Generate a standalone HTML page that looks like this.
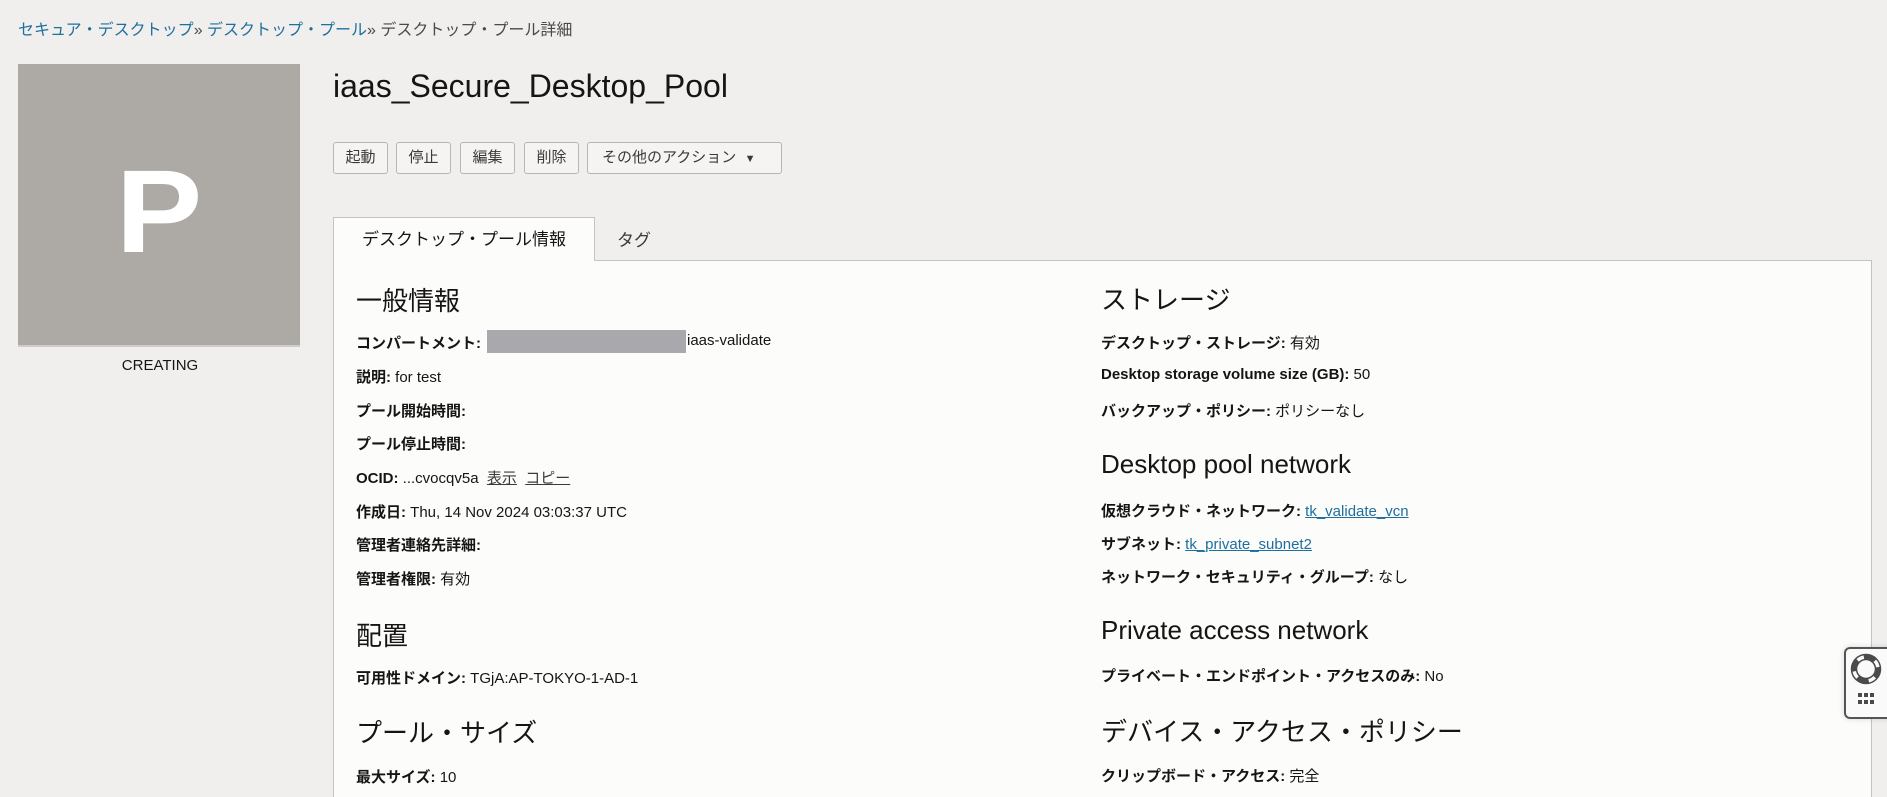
<!DOCTYPE html>
<html><head><meta charset="utf-8"><style>
*{margin:0;padding:0;box-sizing:border-box}
html,body{width:1887px;height:797px;overflow:hidden}
body{background:#f0efed;font-family:"Liberation Sans","Noto Sans CJK JP",sans-serif;color:#161513;position:relative}
.a{position:absolute;white-space:nowrap}
.bc{left:18px;top:16px;font-size:16px;color:#4a4a4a}
.bc a{color:#1e6f9e;text-decoration:none}
.pbox{left:18px;top:64px;width:282px;height:283px;background:#ada9a4;border-bottom:2px solid #cfcdca}
.pbox span{position:absolute;left:0;right:0;top:78px;text-align:center;color:#fff;font-weight:bold;font-size:118px;line-height:140px;transform:scaleX(1.1)}
.cr{left:120px;top:357px;font-size:15px;width:80px;text-align:center}
.title{left:333px;top:68px;font-size:32px}
.btn{top:142px;height:32px;border:1px solid #b8b6b2;border-radius:3px;background:#f5f4f2;font-size:15px;line-height:30px;text-align:center;color:#3a3a3a}
.tab1{left:333px;top:217px;width:262px;height:44px;background:#fcfcfb;border:1px solid #c5c3c0;border-bottom:none;font-size:17px;line-height:44px;text-align:center;z-index:2}
.tab2{left:617px;top:226px;font-size:17px;color:#3a3a3a}
.panel{left:333px;top:260px;width:1539px;height:537px;background:#fcfcfb;border:1px solid #c5c3c0;border-bottom:none}
h2{position:absolute;font-weight:normal;font-size:26px;white-space:nowrap}
.r{position:absolute;font-size:15px;white-space:nowrap}
.r b{font-weight:bold}
.r a{color:#1e6f9e;text-decoration:underline}
.r u{color:#3a3a3a}
</style></head><body>
<div class="a bc"><a>セキュア・デスクトップ</a>» <a>デスクトップ・プール</a>» デスクトップ・プール詳細</div>
<div class="a pbox"><span>P</span></div>
<div class="a cr">CREATING</div>
<div class="a title">iaas_Secure_Desktop_Pool</div>
<div class="a btn" style="left:333px;width:55px">起動</div>
<div class="a btn" style="left:396px;width:55px">停止</div>
<div class="a btn" style="left:460px;width:55px">編集</div>
<div class="a btn" style="left:524px;width:55px">削除</div>
<div class="a btn" style="left:587px;width:195px;text-align:left;padding-left:14px">その他のアクション&nbsp; <span style="font-size:11px">▼</span></div>
<div class="a tab1">デスクトップ・プール情報</div>
<div class="a tab2">タグ</div>
<div class="a panel"></div>
<h2 style="left:356px;top:281px">一般情報</h2>
<div class="r" style="left:356px;top:332px"><b>コンパートメント:</b></div>
<div class="a" style="left:487px;top:330px;width:199px;height:23px;background:#a9a9ad"></div>
<div class="r" style="left:687px;top:332px">iaas-validate</div>
<div class="r" style="left:356px;top:366px"><b>説明:</b> for test</div>
<div class="r" style="left:356px;top:400px"><b>プール開始時間:</b></div>
<div class="r" style="left:356px;top:433px"><b>プール停止時間:</b></div>
<div class="r" style="left:356px;top:467px"><b>OCID:</b> ...cvocqv5a &nbsp;<u>表示</u> &nbsp;<u>コピー</u></div>
<div class="r" style="left:356px;top:501px"><b>作成日:</b> Thu, 14 Nov 2024 03:03:37 UTC</div>
<div class="r" style="left:356px;top:534px"><b>管理者連絡先詳細:</b></div>
<div class="r" style="left:356px;top:568px"><b>管理者権限:</b> 有効</div>
<h2 style="left:356px;top:616px">配置</h2>
<div class="r" style="left:356px;top:667px"><b>可用性ドメイン:</b> TGjA:AP-TOKYO-1-AD-1</div>
<h2 style="left:356px;top:713px">プール・サイズ</h2>
<div class="r" style="left:356px;top:766px"><b>最大サイズ:</b> 10</div>

<h2 style="left:1101px;top:280px">ストレージ</h2>
<div class="r" style="left:1101px;top:332px"><b>デスクトップ・ストレージ:</b> 有効</div>
<div class="r" style="left:1101px;top:366px"><b>Desktop storage volume size (GB):</b> 50</div>
<div class="r" style="left:1101px;top:400px"><b>バックアップ・ポリシー:</b> ポリシーなし</div>
<h2 style="left:1101px;top:449px">Desktop pool network</h2>
<div class="r" style="left:1101px;top:500px"><b>仮想クラウド・ネットワーク:</b> <a>tk_validate_vcn</a></div>
<div class="r" style="left:1101px;top:533px"><b>サブネット:</b> <a>tk_private_subnet2</a></div>
<div class="r" style="left:1101px;top:566px"><b>ネットワーク・セキュリティ・グループ:</b> なし</div>
<h2 style="left:1101px;top:615px">Private access network</h2>
<div class="r" style="left:1101px;top:665px"><b>プライベート・エンドポイント・アクセスのみ:</b> No</div>
<h2 style="left:1101px;top:712px">デバイス・アクセス・ポリシー</h2>
<div class="r" style="left:1101px;top:765px"><b>クリップボード・アクセス:</b> 完全</div>

<div class="a" style="left:1844px;top:647px;width:50px;height:72px;background:#fafafa;border:2px solid #555;border-radius:6px;box-shadow:0 0 6px rgba(0,0,0,.15)">
<svg width="44" height="68" viewBox="0 0 44 68" style="position:absolute;left:0;top:0">
<circle cx="20" cy="20" r="12" fill="none" stroke="#4a4a4a" stroke-width="5" stroke-dasharray="12 7" stroke-dashoffset="3"/>
<circle cx="20" cy="20" r="14.5" fill="none" stroke="#4a4a4a" stroke-width="1.5"/>
<circle cx="20" cy="20" r="9.5" fill="none" stroke="#4a4a4a" stroke-width="1.5"/>
<g fill="#4a4a4a"><rect x="12" y="44" width="4" height="4"/><rect x="18" y="44" width="4" height="4"/><rect x="24" y="44" width="4" height="4"/><rect x="12" y="51" width="4" height="4"/><rect x="18" y="51" width="4" height="4"/><rect x="24" y="51" width="4" height="4"/></g>
</svg></div>
</body></html>
